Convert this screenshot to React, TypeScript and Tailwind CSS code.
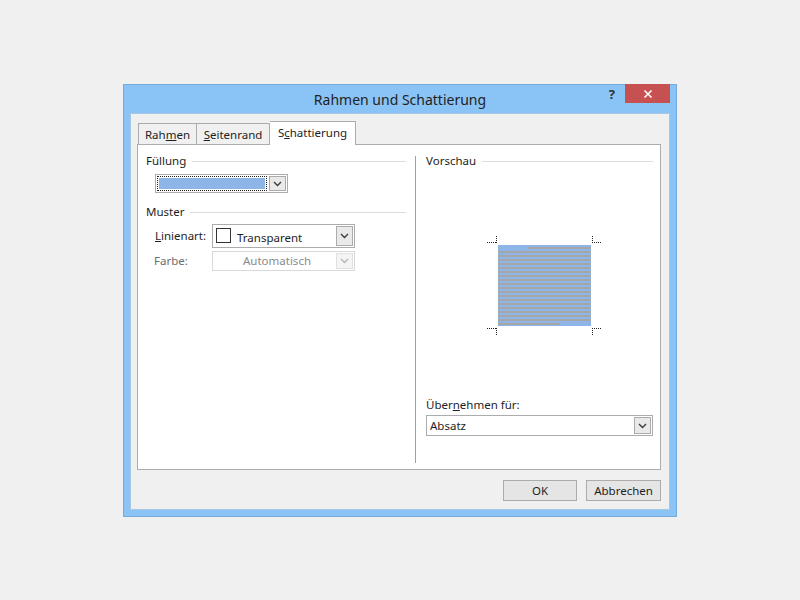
import React from "react";

const font = { fontFamily: '"Segoe UI", "Noto Sans", "Open Sans", sans-serif' };

function Chevron({ disabled = false }: { disabled?: boolean }) {
  return (
    <svg width="9" height="6" viewBox="0 0 9 6">
      <path d="M1 1 L4.5 4.5 L8 1" fill="none" stroke={disabled ? "#b5b5b5" : "#3c3c3c"} strokeWidth="1.4" />
    </svg>
  );
}

function ArrowBtn({ disabled = false }: { disabled?: boolean }) {
  return (
    <div className={`w-[17px] self-stretch m-[1px] border flex items-center justify-center ${disabled ? "border-[#e0e0e0] bg-[#f4f4f4]" : "border-[#acacac] bg-[#e9e9e9]"}`}>
      <Chevron disabled={disabled} />
    </div>
  );
}

function GroupHeader({ label }: { label: string }) {
  return (
    <div className="flex items-center gap-[6px]">
      <span className="text-[11.5px] leading-[14px] text-[#1e1e1e]">{label}</span>
      <div className="flex-1 h-px bg-[#dcdcdc]" />
    </div>
  );
}

function Preview() {
  const stripes = [];
  for (let i = 0; i < 20; i++) {
    const y = 9 + i * 4 + 2;
    let x1 = 0;
    let x2 = 93;
    if (i === 0) x1 = 30;
    if (i === 19) x2 = 62;
    if (y + 2 > 90) break;
    stripes.push(<rect key={i} x={20 + x1} y={y} width={x2 - x1} height="2" fill="#a6a6a6" />);
  }
  return (
    <svg width="133" height="100" viewBox="0 0 133 100">
      <rect x="20" y="9" width="93" height="81" fill="#8db5e8" />
      {stripes}
      <g stroke="#222" strokeWidth="1" strokeDasharray="1 1">
        <line x1="9" y1="6.5" x2="19" y2="6.5" />
        <line x1="18.5" y1="0" x2="18.5" y2="7" />
        <line x1="114" y1="6.5" x2="124" y2="6.5" />
        <line x1="114.5" y1="0" x2="114.5" y2="7" />
        <line x1="9" y1="92.5" x2="19" y2="92.5" />
        <line x1="18.5" y1="92" x2="18.5" y2="99" />
        <line x1="114" y1="92.5" x2="124" y2="92.5" />
        <line x1="114.5" y1="92" x2="114.5" y2="99" />
      </g>
    </svg>
  );
}

export default function App() {
  return (
    <div className="w-[800px] h-[600px] bg-[#f0f0f0] flex justify-center pt-[84px]" style={font}>
      <div className="w-[554px] h-[433px] bg-[#8ac4f6] border border-[#74abdc] flex flex-col px-[6px] pb-[6px]">
        {/* title bar */}
        <div className="h-[28px] grid grid-cols-[1fr_auto_1fr] items-start">
          <div />
          <div className="text-[14px] leading-[28px] text-[#222] pt-[1px]">Rahmen und Schattierung</div>
          <div className="flex justify-end items-start">
            <span className="text-[13px] font-bold text-[#333] mt-[1px] mr-[10px] leading-[16px]">?</span>
            <div className="w-[45px] h-[19px] -mt-[1px] bg-[#c75050] flex items-center justify-center">
              <svg width="10" height="10" viewBox="0 0 10 10">
                <path d="M1.5 1.5 L8.5 8.5 M8.5 1.5 L1.5 8.5" stroke="#fff" strokeWidth="1.6" />
              </svg>
            </div>
          </div>
        </div>
        {/* client area */}
        <div className="flex-1 bg-[#f0f0f0] border border-[#a9c6e0] flex flex-col pl-[6px] pr-[8px] pt-[6px] text-[11.5px] text-[#1e1e1e]">
          {/* tabs */}
          <div className="flex items-end h-[24px] pl-[1px] relative z-10">
            <div className="w-[59px] h-[21px] border border-b-0 border-[#acacac] bg-[#f0f0f0] flex items-center justify-center leading-[14px] pt-[2px]">
              <span>Rah<span className="underline">m</span>en</span>
            </div>
            <div className="w-[73px] h-[21px] border border-l-0 border-b-0 border-[#acacac] bg-[#f0f0f0] flex items-center justify-center leading-[14px] pt-[2px]">
              <span><span className="underline">S</span>eitenrand</span>
            </div>
            <div className="w-[86px] h-[24px] border border-l-0 border-b-0 border-[#acacac] bg-white flex items-center justify-center leading-[14px] -mb-px pb-[2px]">
              <span>S<span className="underline">c</span>hattierung</span>
            </div>
          </div>
          {/* panel */}
          <div className="h-[326px] bg-white border border-[#acacac] flex">
            {/* left */}
            <div className="w-[277px] flex flex-col pl-[8px] pr-[9px] pt-[9px]">
              <GroupHeader label="Füllung" />
              <div className="ml-[9px] mt-[6px] w-[133px] h-[19px] border border-[#acacac] flex items-stretch">
                <div className="flex-1 m-[1px] border border-dotted border-[#222] p-px">
                  <div className="w-full h-full bg-[#8db5e8]" />
                </div>
                <ArrowBtn />
              </div>
              <div className="mt-[12px]">
                <GroupHeader label="Muster" />
              </div>
              <div className="flex items-center mt-[5px] ml-[9px]">
                <span className="w-[57px] leading-[14px]">
                  <span className="underline">L</span>inienart:
                </span>
                <div className="w-[143px] h-[24px] border border-[#acacac] flex items-stretch">
                  <div className="w-[15px] h-[15px] border border-[#333] ml-[3px] mt-[3px]" />
                  <span className="ml-[6px] mt-[6px] leading-[14px] flex-1">Transparent</span>
                  <ArrowBtn />
                </div>
              </div>
              <div className="flex items-center mt-[3px] ml-[8px]">
                <span className="w-[58px] leading-[14px] text-[#6d6d6d]">Farbe:</span>
                <div className="w-[143px] h-[20px] border border-[#d9d9d9] flex items-stretch">
                  <span className="flex-1 text-center leading-[18px] text-[#8a8a8a] pl-[6px]">Automatisch</span>
                  <ArrowBtn disabled />
                </div>
              </div>
            </div>
            {/* separator */}
            <div className="w-px bg-[#a0a0a0] mt-[11px] mb-[6px]" />
            {/* right */}
            <div className="flex-1 flex flex-col pl-[10px] pr-[7px] pt-[9px]">
              <GroupHeader label="Vorschau" />
              <div className="flex justify-center mt-[68px] ml-[10px]">
                <Preview />
              </div>
              <div className="mt-[62px] leading-[14px]">
                Über<span className="underline">n</span>ehmen für:
              </div>
              <div className="mt-[3px] h-[21px] border border-[#acacac] flex items-stretch">
                <span className="flex-1 pl-[3px] leading-[19px]">Absatz</span>
                <ArrowBtn />
              </div>
            </div>
          </div>
          {/* buttons */}
          <div className="flex justify-end gap-[9px] mt-[10px] pr-[0px]">
            <div className="w-[74px] h-[21px] border border-[#acacac] bg-[#e5e5e5] flex items-center justify-center leading-[14px]">OK</div>
            <div className="w-[75px] h-[21px] border border-[#acacac] bg-[#e5e5e5] flex items-center justify-center leading-[14px]">Abbrechen</div>
          </div>
        </div>
      </div>
    </div>
  );
}
